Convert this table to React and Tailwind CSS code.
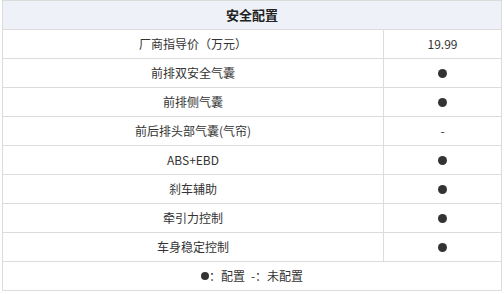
import React from 'react';

const rows = [
  { name: '厂商指导价（万元）', value: '19.99' },
  { name: '前排双安全气囊', value: 'dot' },
  { name: '前排侧气囊', value: 'dot' },
  { name: '前后排头部气囊(气帘)', value: '-' },
  { name: 'ABS+EBD', value: 'dot' },
  { name: '刹车辅助', value: 'dot' },
  { name: '牵引力控制', value: 'dot' },
  { name: '车身稳定控制', value: 'dot' },
];

function Dot({ size = 'w-[9px] h-[9px]' }) {
  return <span className={`inline-block rounded-full bg-[#333] ${size}`} />;
}

export default function App() {
  return (
    <div
      className="min-h-screen bg-white pt-0 text-[12px] text-[#333]"
      style={{ fontFamily: '"Noto Sans CJK SC", "Noto Sans", sans-serif' }}
    >
      <div className="ml-[2px] w-[500px] border-t border-l border-r border-[#dcdcdc]">
        {/* Header */}
        <div className="h-[29px] flex items-center justify-center bg-[#eef2f8] border-b border-[#dcdcdc]">
          <span className="font-bold text-[13px] text-[#222]">安全配置</span>
        </div>

        {/* Rows */}
        {rows.map((row) => (
          <div key={row.name} className="h-[29px] flex border-b border-[#dcdcdc]">
            <div className="w-[381px] border-r border-[#dcdcdc] flex items-center justify-center">
              {row.name}
            </div>
            <div className="flex-1 flex items-center justify-center">
              {row.value === 'dot' ? <Dot /> : row.value}
            </div>
          </div>
        ))}

        {/* Legend */}
        <div className="h-[29px] flex items-center justify-center border-b border-[#dcdcdc]">
          <Dot size="w-[8px] h-[8px]" />
          <span>：配置</span>
          <span className="ml-[6px]">-：未配置</span>
        </div>
      </div>
    </div>
  );
}
